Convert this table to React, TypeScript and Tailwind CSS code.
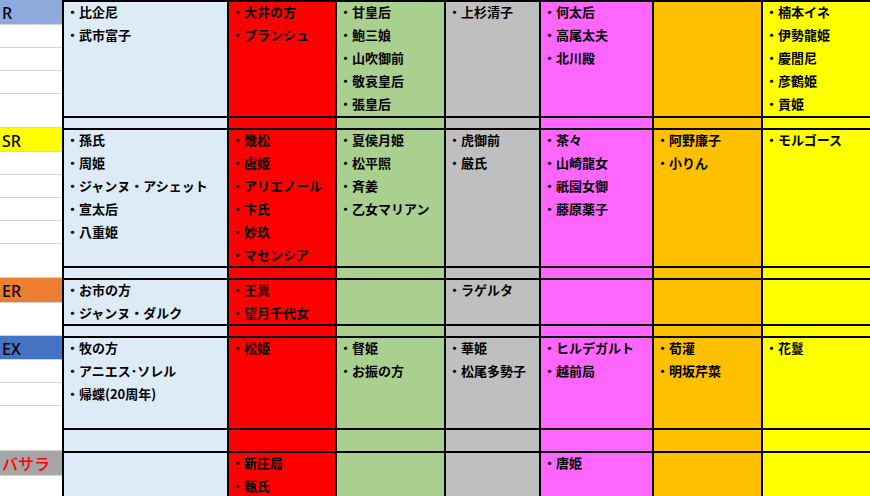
import clsx from "clsx";

// 列ごとの背景色と幅（左罫線 2px を含む）
const columns = [
  { bg: "bg-[#ddebf7]", w: "w-[165px]" },
  { bg: "bg-[#ff0000]", w: "w-[108px]" },
  { bg: "bg-[#a9d08e]", w: "w-[109px]" },
  { bg: "bg-[#bfbfbf]", w: "w-[95px]" },
  { bg: "bg-[#ff66ff]", w: "w-[113px]" },
  { bg: "bg-[#ffc000]", w: "w-[109px]" },
  { bg: "bg-[#ffff00]", w: "flex-1" },
];

interface Band {
  label?: string;
  labelClass?: string;
  firstRow: string;
  height: string;
  rows: number;
  items: string[][];
}

const bands: Band[] = [
  {
    label: "R",
    labelClass: "bg-[#8ea9db] text-black",
    firstRow: "h-[25px]",
    height: "h-[116px]",
    rows: 5,
    items: [
      ["比企尼", "武市富子"],
      ["大井の方", "ブランシュ"],
      ["甘皇后", "鮑三娘", "山吹御前", "敬哀皇后", "張皇后"],
      ["上杉清子"],
      ["何太后", "高尾太夫", "北川殿"],
      [],
      ["楠本イネ", "伊勢龍姫", "慶誾尼", "彦鶴姫", "貢姫"],
    ],
  },
  { firstRow: "h-[12px]", height: "h-[12px]", rows: 1, items: [] },
  {
    label: "SR",
    labelClass: "bg-[#ffff00] text-black",
    firstRow: "h-[24px]",
    height: "h-[138px]",
    rows: 6,
    items: [
      ["孫氏", "周姫", "ジャンヌ・アシェット", "宣太后", "八重姫"],
      ["幾松", "虞姫", "アリエノール", "卞氏", "妙玖", "マセンシア"],
      ["夏侯月姫", "松平照", "斉姜", "乙女マリアン"],
      ["虎御前", "厳氏"],
      ["茶々", "山崎龍女", "祇園女御", "藤原薬子"],
      ["阿野廉子", "小りん"],
      ["モルゴース"],
    ],
  },
  { firstRow: "h-[12px]", height: "h-[12px]", rows: 1, items: [] },
  {
    label: "ER",
    labelClass: "bg-[#ed7d31] text-black",
    firstRow: "h-[25px]",
    height: "h-[46px]",
    rows: 2,
    items: [["お市の方", "ジャンヌ・ダルク"], ["王異", "望月千代女"], [], ["ラゲルタ"], [], [], []],
  },
  { firstRow: "h-[12px]", height: "h-[12px]", rows: 1, items: [] },
  {
    label: "EX",
    labelClass: "bg-[#4472c4] text-black",
    firstRow: "h-[24px]",
    height: "h-[92px]",
    rows: 4,
    items: [
      ["牧の方", "アニエス･ソレル", "帰蝶(20周年)"],
      ["松姫"],
      ["督姫", "お振の方"],
      ["華姫", "松尾多勢子"],
      ["ヒルデガルト", "越前局"],
      ["荀灌", "明坂芹菜"],
      ["花鬘"],
    ],
  },
  { firstRow: "h-[23px]", height: "h-[23px]", rows: 1, items: [] },
  {
    label: "バサラ",
    labelClass: "bg-[#a6a6a6] text-[#ff0000]",
    firstRow: "h-[25px]",
    height: "h-[92px]",
    rows: 4,
    items: [[], ["新庄局", "甄氏"], [], [], ["唐姫"], [], []],
  },
];

function LabelColumn({ band }: { band: Band }) {
  const rest = Array.from({ length: band.rows });
  return (
    <div className={clsx("flex w-[62px] shrink-0 flex-col overflow-hidden bg-white", band.height)}>
      <div
        className={clsx(
          "flex shrink-0 items-center border-b border-[#d4d4d4] pl-[2px] pt-[2px] text-[16px] leading-none font-medium",
          band.firstRow,
          band.labelClass
        )}
        style={{ fontFamily: '"Noto Sans", "Noto Sans CJK JP", sans-serif' }}
      >
        {band.label}
      </div>
      {band.label &&
        rest.map((_, i) => <div key={i} className="h-[23px] shrink-0 border-b border-[#d4d4d4]" />)}
    </div>
  );
}

export default function App() {
  return (
    <div
      className="h-[496px] w-[870px] overflow-hidden bg-white text-black"
      style={{ fontFamily: '"Noto Sans CJK JP", "Noto Sans", sans-serif' }}
    >
      {bands.map((band, bi) => (
        <div key={bi} className={clsx("flex", band.height)}>
          <LabelColumn band={band} />
          {columns.map((col, ci) => (
            <div
              key={ci}
              className={clsx(
                "shrink-0 overflow-hidden border-t-2 border-l-2 border-black pl-[2px]",
                col.bg,
                col.w,
                band.height
              )}
            >
              {(band.items[ci] || []).map((name) => (
                <div key={name} className="h-[23px] whitespace-nowrap text-[13px] leading-[19px] font-bold">
                  ・{name}
                </div>
              ))}
            </div>
          ))}
        </div>
      ))}
    </div>
  );
}
